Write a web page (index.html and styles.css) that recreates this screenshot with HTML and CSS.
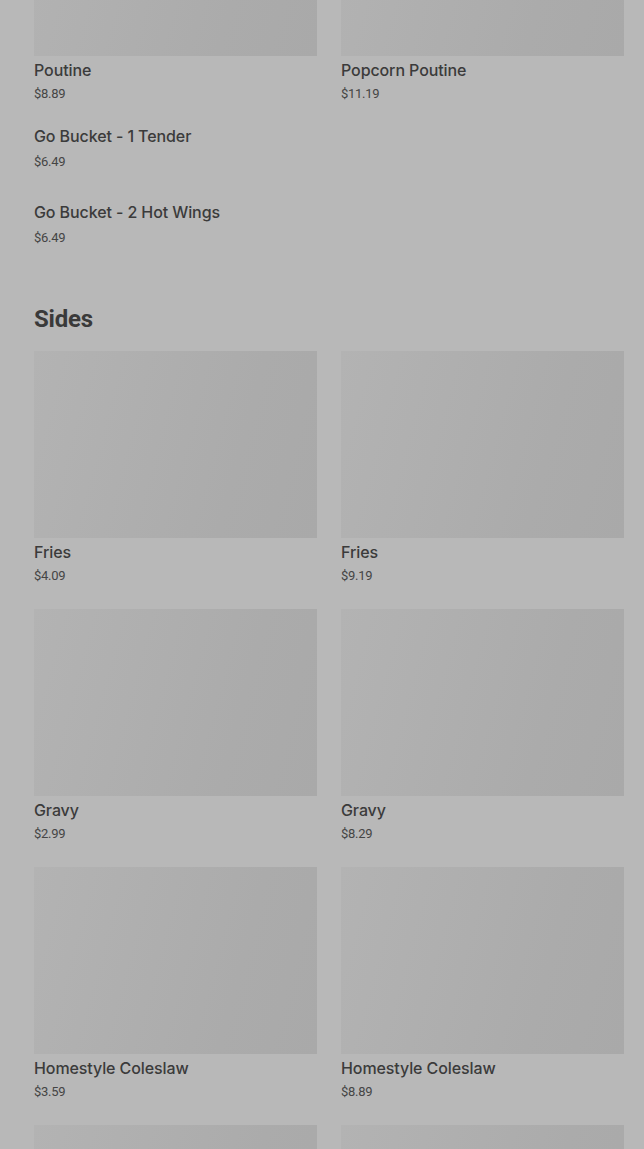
FILE: index.html
```html
<!DOCTYPE html>
<html lang="en">
<head>
<meta charset="utf-8">
<title>Menu</title>
<link rel="stylesheet" href="styles.css">
</head>
<body>
<main class="menu">
  <section class="section">
    <div class="grid">
      <div class="card">
        <div class="thumb"></div>
        <div class="title">Poutine</div>
        <div class="price">$8.89</div>
      </div>
      <div class="card">
        <div class="thumb"></div>
        <div class="title">Popcorn Poutine</div>
        <div class="price">$11.19</div>
      </div>
    </div>
    <ul class="list">
      <li class="item">
        <div class="title">Go Bucket - 1 Tender</div>
        <div class="price">$6.49</div>
      </li>
      <li class="item">
        <div class="title">Go Bucket - 2 Hot Wings</div>
        <div class="price">$6.49</div>
      </li>
    </ul>
  </section>

  <section class="section">
    <h2 class="heading">Sides</h2>
    <div class="grid">
      <div class="card">
        <div class="thumb"></div>
        <div class="title">Fries</div>
        <div class="price">$4.09</div>
      </div>
      <div class="card">
        <div class="thumb"></div>
        <div class="title">Fries</div>
        <div class="price">$9.19</div>
      </div>
      <div class="card">
        <div class="thumb"></div>
        <div class="title">Gravy</div>
        <div class="price">$2.99</div>
      </div>
      <div class="card">
        <div class="thumb"></div>
        <div class="title">Gravy</div>
        <div class="price">$8.29</div>
      </div>
      <div class="card">
        <div class="thumb"></div>
        <div class="title">Homestyle Coleslaw</div>
        <div class="price">$3.59</div>
      </div>
      <div class="card">
        <div class="thumb"></div>
        <div class="title">Homestyle Coleslaw</div>
        <div class="price">$8.89</div>
      </div>
      <div class="card">
        <div class="thumb"></div>
      </div>
      <div class="card">
        <div class="thumb"></div>
      </div>
    </div>
  </section>
</main>
</body>
</html>
```

FILE: styles.css
```css
html, body {
  margin: 0;
  padding: 0;
  background: #b8b8b8;
  overflow: hidden;
}

body {
  font-family: Roboto, "Liberation Sans", Arial, sans-serif;
  color: #3b3b3b;
  height: 1149px;
}

.menu {
  margin-top: -131px;
  padding: 0 20px 0 34px;
}

.section {
  display: flex;
  flex-direction: column;
}

.heading {
  margin: 43px 0 18px 0;
  font-size: 24px;
  line-height: 28px;
  font-weight: 700;
  color: #3a3a3a;
  letter-spacing: -0.2px;
}

.grid {
  display: grid;
  grid-template-columns: 283px 283px;
  column-gap: 24px;
  row-gap: 24px;
}

.card {
  display: flex;
  flex-direction: column;
}

.thumb {
  height: 187px;
  background: linear-gradient(105deg, #b3b3b3 0%, #afafaf 35%, #ababab 70%, #a9a9a9 100%);
}

.title {
  margin-top: 4px;
  font-family: Inter, Roboto, "Liberation Sans", Arial, sans-serif;
  font-size: 16px;
  line-height: 20px;
  font-weight: 500;
  color: #3b3b3b;
  letter-spacing: -0.1px;
}

.price {
  margin-top: 5px;
  font-size: 13px;
  line-height: 18px;
  color: #454545;
  letter-spacing: -0.3px;
}

.list {
  list-style: none;
  margin: 7px 0 0 0;
  padding: 0;
}

.item {
  padding: 12px 0 15px 0;
}

.item .title {
  margin-top: 4px;
}

.item .price {
  margin-top: 7px;
}
```
